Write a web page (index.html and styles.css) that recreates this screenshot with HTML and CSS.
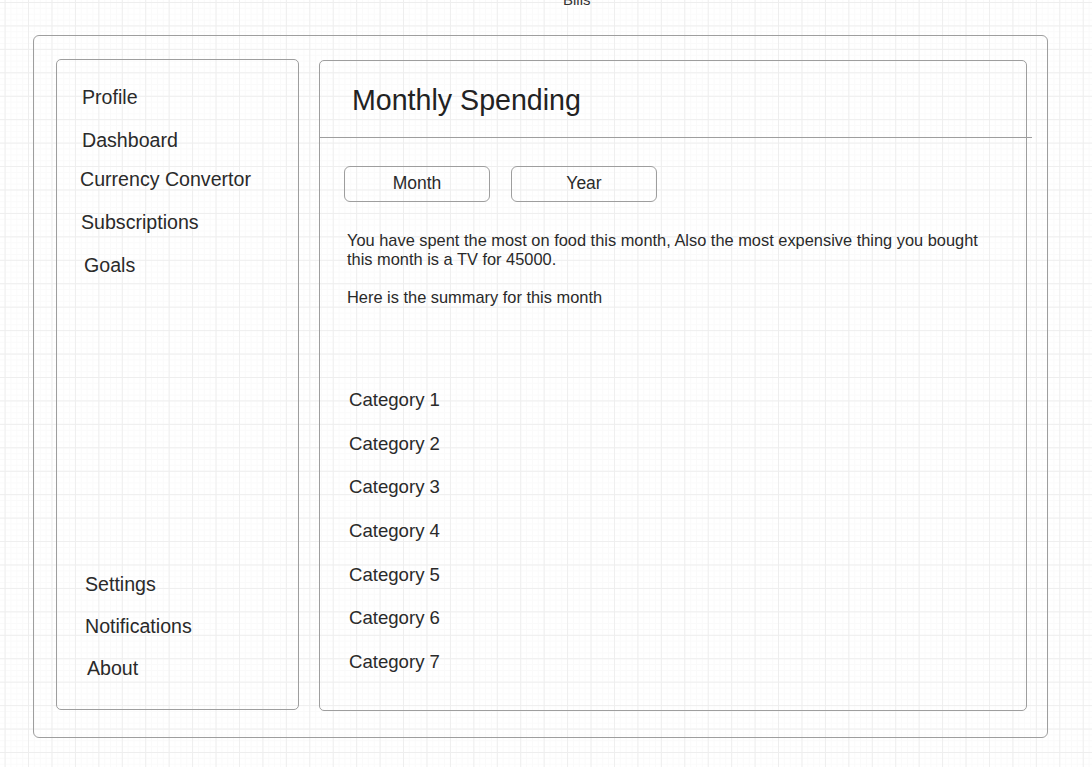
FILE: index.html
```html
<!DOCTYPE html>
<html lang="en">
<head>
<meta charset="utf-8">
<title>Bills</title>
<link rel="stylesheet" href="styles.css">
</head>
<body>
<div class="app-title"><span>Bills</span></div>
<div class="frame">
  <nav class="sidebar">
    <ul class="nav-group nav-group--top">
      <li class="nav-item">Profile</li>
      <li class="nav-item">Dashboard</li>
      <li class="nav-item nav-item--left2 nav-item--up">Currency Convertor</li>
      <li class="nav-item nav-item--left1">Subscriptions</li>
      <li class="nav-item nav-item--right2">Goals</li>
    </ul>
    <ul class="nav-group nav-group--bottom">
      <li class="nav-item">Settings</li>
      <li class="nav-item">Notifications</li>
      <li class="nav-item nav-item--right2">About</li>
    </ul>
  </nav>
  <main class="panel">
    <header class="panel-header">
      <h1 class="panel-title">Monthly Spending</h1>
    </header>
    <section class="panel-body">
      <div class="toggle-row">
        <button class="toggle-btn">Month</button>
        <button class="toggle-btn">Year</button>
      </div>
      <div class="summary">
        <p class="summary-text">You have spent the most on food this month, Also the most expensive thing you bought this month is a TV for 45000.</p>
        <p class="summary-text">Here is the summary for this month</p>
      </div>
      <ul class="category-list">
        <li class="category">Category 1</li>
        <li class="category">Category 2</li>
        <li class="category">Category 3</li>
        <li class="category">Category 4</li>
        <li class="category">Category 5</li>
        <li class="category">Category 6</li>
        <li class="category">Category 7</li>
      </ul>
    </section>
  </main>
</div>
</body>
</html>
```

FILE: styles.css
```css
* {
  box-sizing: border-box;
}

html, body {
  margin: 0;
  padding: 0;
}

body {
  width: 1092px;
  height: 767px;
  overflow: hidden;
  font-family: "Liberation Sans", Arial, sans-serif;
  color: #2a2a2a;
  background-color: #ffffff;
  background-image:
    linear-gradient(to right, #eeeeee 1px, transparent 1px),
    linear-gradient(to bottom, #eeeeee 1px, transparent 1px),
    linear-gradient(to right, #fafafa 1px, transparent 1px),
    linear-gradient(to bottom, #fafafa 1px, transparent 1px);
  background-size:
    23.44px 23.44px,
    23.44px 23.44px,
    5.86px 5.86px,
    5.86px 5.86px;
  background-position:
    4.6px 0,
    0 2px,
    4.6px 0,
    0 2px;
}

.app-title {
  height: 8px;
  display: flex;
  align-items: flex-end;
  padding-left: 563px;
  font-size: 15px;
  line-height: 17px;
  color: #333;
}

.frame {
  margin: 27px 0 0 33px;
  width: 1015px;
  height: 703px;
  border: 1px solid #9e9e9e;
  border-radius: 6px;
  padding: 23px 20px 26px 22px;
  display: flex;
  align-items: flex-start;
  gap: 20px;
}

.sidebar {
  width: 243px;
  height: 651px;
  border: 1px solid #9e9e9e;
  border-radius: 5px;
  display: flex;
  flex-direction: column;
  justify-content: space-between;
}

.nav-group {
  list-style: none;
  margin: 0;
  display: flex;
  flex-direction: column;
}

.nav-group--top {
  padding: 26px 0 0 25px;
  gap: 21px;
}

.nav-group--bottom {
  padding: 0 0 30.5px 28px;
  gap: 20px;
}

.nav-item {
  font-size: 19.6px;
  line-height: 22px;
  white-space: nowrap;
}

.nav-item--left2 { margin-left: -2px; }
.nav-item--left1 { margin-left: -1px; }
.nav-item--right2 { margin-left: 2px; }
.nav-item--up { margin-top: -4px; }

.panel {
  margin-top: 1px;
  width: 708px;
  height: 651px;
  border: 1px solid #9e9e9e;
  border-radius: 5px;
}

.panel-header {
  margin: 0 -6px 0 -1px;
  height: 77px;
  padding: 22px 0 0 33px;
  border-bottom: 1px solid #9e9e9e;
}

.panel-title {
  margin: 0;
  font-size: 28.6px;
  line-height: 34px;
  font-weight: normal;
  color: #222;
}

.panel-body {
  padding: 28px 0 0 24px;
}

.toggle-row {
  display: flex;
  gap: 21px;
}

.toggle-btn {
  width: 146px;
  height: 36px;
  border: 1px solid #9e9e9e;
  border-radius: 6px;
  background: transparent;
  font-family: "Liberation Sans", Arial, sans-serif;
  font-size: 17.5px;
  line-height: 20px;
  color: #2a2a2a;
  padding: 0 0 2px 0;
}

.summary {
  margin: 29px 0 0 3px;
  width: 660px;
}

.summary-text {
  margin: 0 0 19px 0;
  font-size: 16.4px;
  line-height: 19px;
  color: #2a2a2a;
}

.category-list {
  list-style: none;
  margin: 82px 0 0 0;
  padding: 0 0 0 5px;
  display: flex;
  flex-direction: column;
  gap: 21.67px;
}

.category {
  font-size: 18.6px;
  line-height: 22px;
  white-space: nowrap;
}
```
